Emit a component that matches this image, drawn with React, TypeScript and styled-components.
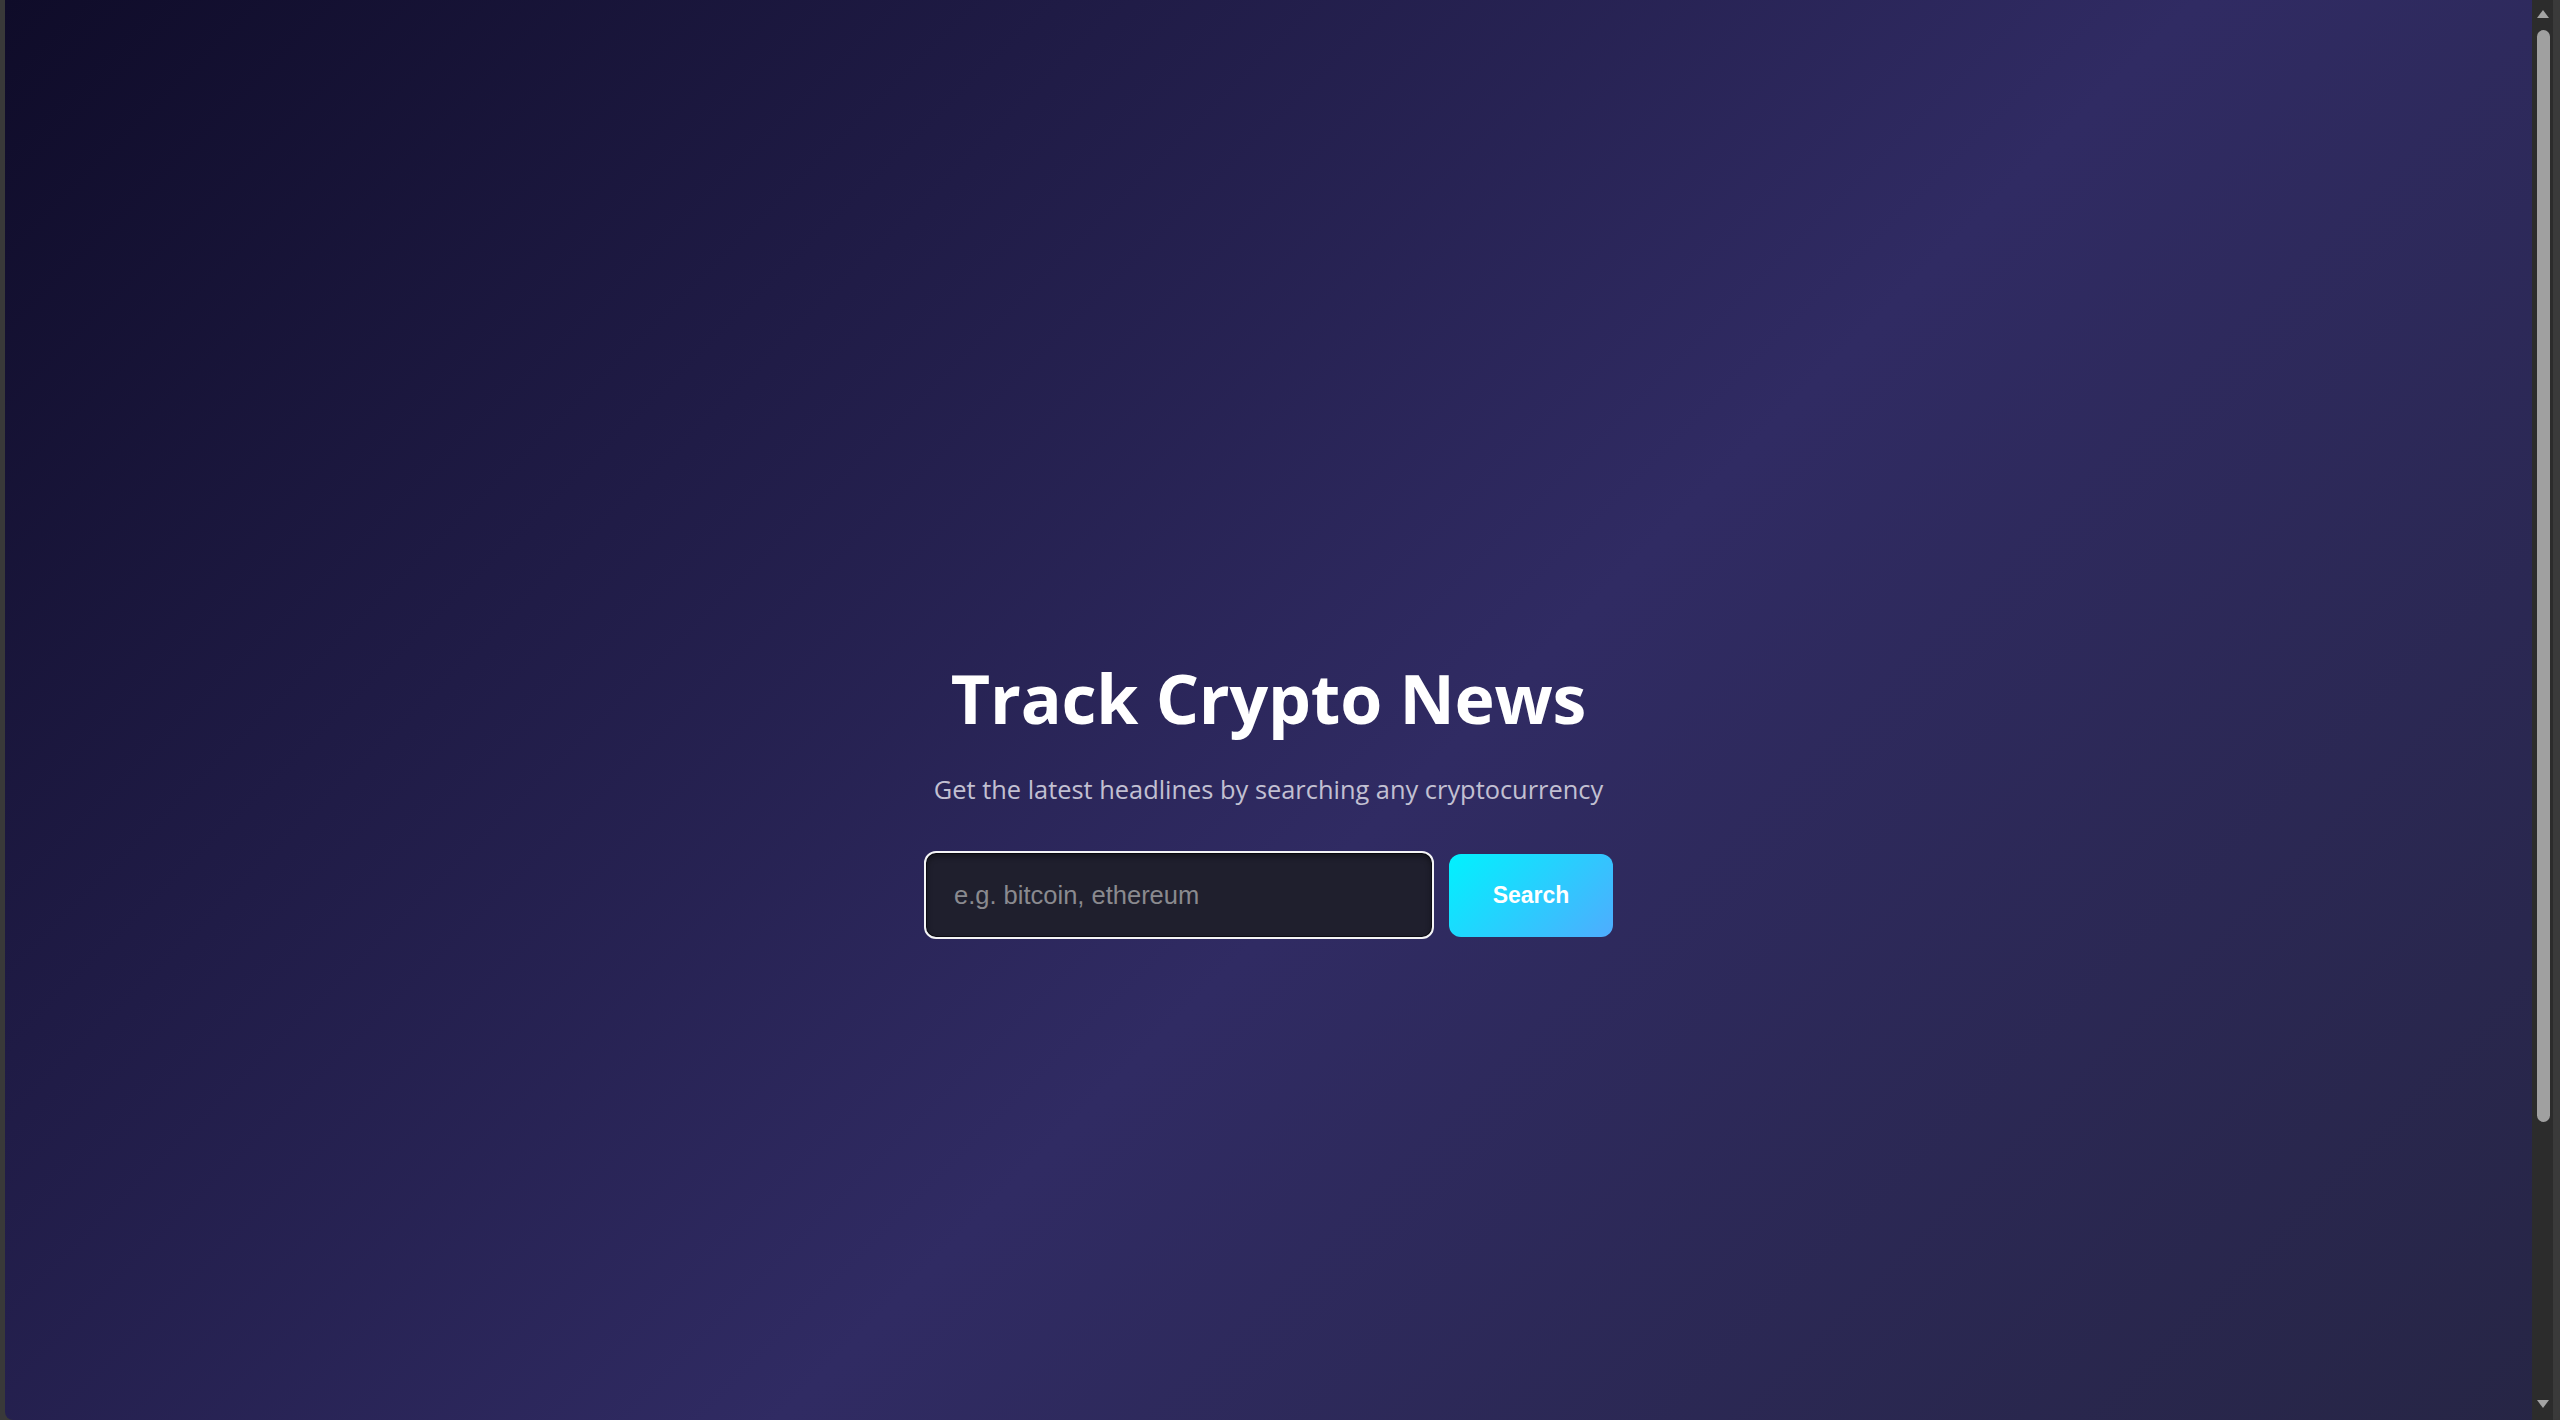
import React from "react";
import styled, { createGlobalStyle } from "styled-components";

const GlobalStyle = createGlobalStyle`
  html, body {
    margin: 0;
    padding: 0;
    background: #393939;
    overflow: hidden;
  }
  * { box-sizing: border-box; }
`;

const Window = styled.div`
  display: flex;
  flex-direction: row;
  width: 2560px;
  height: 1420px;
  padding-left: 5px;
  background: #393939;
`;

const Viewport = styled.main`
  flex: 1;
  display: flex;
  flex-direction: column;
  align-items: center;
  padding-top: 655px;
  background: linear-gradient(135deg, #0f0c29 0%, #302b63 50%, #24243e 100%);
  background-size: 100% 1860px;
  background-repeat: no-repeat;
  border-bottom-left-radius: 8px;
  overflow: hidden;
`;

const Title = styled.h1`
  margin: 0;
  font-family: "Open Sans", "Noto Sans", sans-serif;
  font-weight: 700;
  font-size: 68px;
  line-height: 86px;
  color: #ffffff;
  letter-spacing: -0.2px;
`;

const Subtitle = styled.p`
  margin: 30px 0 0;
  font-family: "Open Sans", "Noto Sans", sans-serif;
  font-weight: 400;
  font-size: 25.4px;
  line-height: 36px;
  color: #c2c0d2;
`;

const SearchForm = styled.form`
  display: flex;
  flex-direction: row;
  align-items: center;
  gap: 15px;
  margin-top: 44px;
`;

const SearchInput = styled.input`
  width: 510px;
  height: 88px;
  padding: 0 28px;
  border: 2px solid #f4f4f6;
  border-radius: 12px;
  background: #1f1f2d;
  box-shadow: inset 0 0 0 1px rgba(0, 0, 0, 0.55), inset 0 3px 6px rgba(0, 0, 0, 0.45);
  font-family: "Liberation Sans", Arial, sans-serif;
  font-size: 25.5px;
  color: #ffffff;
  outline: none;

  &::placeholder {
    color: #8a8a8f;
  }
`;

const SearchButton = styled.button`
  width: 164px;
  height: 83px;
  border: none;
  border-radius: 12px;
  background: linear-gradient(135deg, #00f2fe 0%, #4facfe 100%);
  font-family: "Liberation Sans", Arial, sans-serif;
  font-weight: 700;
  font-size: 23px;
  color: #ffffff;
  cursor: pointer;
`;

const ScrollRail = styled.div`
  width: 21px;
  height: 100%;
  display: flex;
  flex-direction: column;
  align-items: center;
  background: #2c2c2c;
  padding: 10px 0 12px;
`;

const Arrow = styled.svg`
  display: block;
  width: 12px;
  height: 8px;
  flex: none;
`;

const Thumb = styled.div`
  width: 13px;
  height: 1092px;
  margin: 12px 0 0 2px;
  border-radius: 7px;
  background: #a0a0a0;
`;

const RailSpacer = styled.div`
  flex: 1;
`;

const RightEdge = styled.div`
  width: 7px;
  height: 100%;
  background: #3a3a3a;
  border-bottom-right-radius: 8px;
`;

export default function App() {
  return (
    <>
      <GlobalStyle />
      <Window>
        <Viewport>
          <Title>Track Crypto News</Title>
          <Subtitle>Get the latest headlines by searching any cryptocurrency</Subtitle>
          <SearchForm onSubmit={(e) => e.preventDefault()}>
            <SearchInput type="text" placeholder="e.g. bitcoin, ethereum" />
            <SearchButton type="submit">Search</SearchButton>
          </SearchForm>
        </Viewport>
        <ScrollRail>
          <Arrow viewBox="0 0 12 8">
            <polygon points="6,0 12,8 0,8" fill="#a3a3a3" />
          </Arrow>
          <Thumb />
          <RailSpacer />
          <Arrow viewBox="0 0 12 8">
            <polygon points="0,0 12,0 6,8" fill="#a3a3a3" />
          </Arrow>
        </ScrollRail>
        <RightEdge />
      </Window>
    </>
  );
}
